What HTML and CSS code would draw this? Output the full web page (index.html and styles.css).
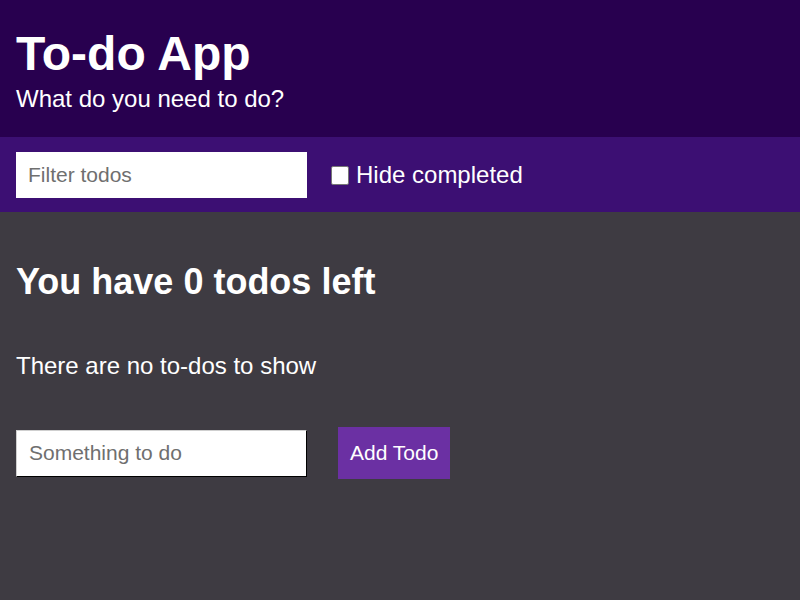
FILE: index.html
```html
<!DOCTYPE html>
<html lang="en">
<head>
<meta charset="utf-8">
<title>To-do App</title>
<link rel="stylesheet" href="styles.css">
</head>
<body>
<header class="header">
  <h1 class="header__title">To-do App</h1>
  <p class="header__subtitle">What do you need to do?</p>
</header>
<div class="actions">
  <input class="input input--filter" type="text" placeholder="Filter todos">
  <label class="checkbox">
    <input class="checkbox__box" type="checkbox">
    <span>Hide completed</span>
  </label>
</div>
<main class="content">
  <h2 class="summary">You have 0 todos left</h2>
  <p class="empty">There are no to-dos to show</p>
  <form class="add-form">
    <input class="input input--new" type="text" placeholder="Something to do">
    <button class="button" type="button">Add Todo</button>
  </form>
</main>
</body>
</html>
```
FILE: styles.css
```css
* { box-sizing: border-box; }
html, body {
  margin: 0;
  height: 100%;
}
body {
  background: #3e3b42;
  color: #ffffff;
  font-family: "Liberation Sans", Arial, sans-serif;
  font-size: 24px;
}
.header {
  background: #28004f;
  padding: 26px 16px 24px;
}
.header__title {
  margin: 0;
  font-size: 48px;
  line-height: 55px;
  font-weight: bold;
}
.header__subtitle {
  margin: 4px 0 0;
  font-size: 24px;
  line-height: 28px;
}
.actions {
  background: #3c0f73;
  height: 75px;
  padding: 0 16px;
  display: flex;
  align-items: center;
  gap: 24px;
}
.input {
  width: 291px;
  height: 46px;
  font-family: "Liberation Sans", Arial, sans-serif;
  font-size: 21px;
  padding: 0 12px;
  color: #333;
  background: #fff;
  outline: none;
}
.input::placeholder { color: #6f6f6f; }
.input--filter {
  border: none;
}
.input--new {
  height: 47px;
  border: 1px solid #000;
  border-top-color: #cfcfcf;
  border-left-color: #cfcfcf;
}
.checkbox {
  display: flex;
  align-items: center;
  gap: 7px;
  font-size: 24px;
  line-height: 28px;
  padding-top: 1px;
}
.checkbox__box {
  appearance: none;
  -webkit-appearance: none;
  margin: 0;
  width: 18px;
  height: 19px;
  background: #fff;
  border: 1px solid #767676;
  border-radius: 2px;
}
.content {
  padding: 0 16px;
}
.summary {
  margin: 0;
  padding-top: 49px;
  font-size: 36px;
  line-height: 41px;
  font-weight: bold;
}
.empty {
  margin: 50px 0 0;
  font-size: 24px;
  line-height: 28px;
}
.add-form {
  margin-top: 47px;
  display: flex;
  align-items: center;
  gap: 31px;
}
.button {
  background: #6b30a3;
  color: #fff;
  border: none;
  height: 52px;
  padding: 0 12px;
  font-family: "Liberation Sans", Arial, sans-serif;
  font-size: 21px;
  cursor: pointer;
}
```
